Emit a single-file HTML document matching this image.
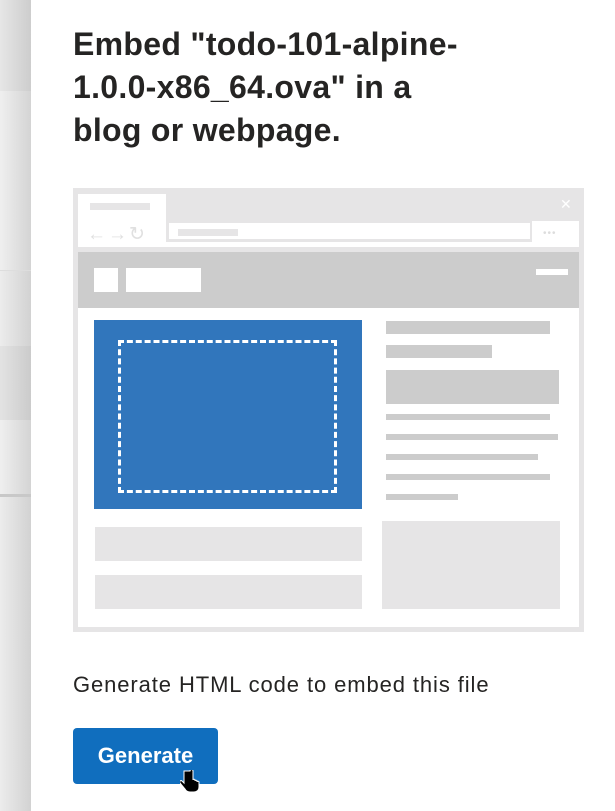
<!DOCTYPE html>
<html><head><meta charset="utf-8"><style>
*{margin:0;padding:0;box-sizing:border-box}
body{width:615px;height:811px;overflow:hidden;background:#fff;font-family:"Liberation Sans","DejaVu Sans",sans-serif;position:relative;color:#252423}
.strip{position:absolute;left:0;top:0;width:31px;height:811px;background:linear-gradient(to right,#ececec,#d2d2d2)}
.s{position:absolute;left:0;width:31px}
.abs{position:absolute}
h1{position:absolute;left:73px;top:23px;font-size:32px;font-weight:bold;line-height:43px;color:#252423;letter-spacing:0.3px;white-space:nowrap}
.g{background:#ccc}
.l{background:#e6e5e6}
</style></head><body>
<div class="strip"></div>
<div class="s" style="top:0;height:91px;background:linear-gradient(to right,#e6e6e6,#cdcdcd)"></div>
<div class="s" style="top:91px;height:180px;background:linear-gradient(to right,#efefef,#d4d4d4)"></div>
<div class="s" style="top:270px;height:1px;background:#ddd"></div>
<div class="s" style="top:346px;height:74px;background:linear-gradient(to right,#e3e3e3,#cbcbcb)"></div>
<div class="s" style="top:420px;height:75px;background:linear-gradient(to right,#efefef,#d4d4d4)"></div>
<div class="s" style="top:494px;height:3px;background:#c8c8c8"></div>

<h1>Embed "todo-101-alpine-<br>1.0.0-x86_64.ova" in a<br>blog or webpage.</h1>

<div class="abs l" style="left:73px;top:188px;width:511px;height:444px"></div>
<div class="abs" style="left:78px;top:194px;width:88px;height:27px;background:#fff"></div>
<div class="abs l" style="left:90px;top:203px;width:60px;height:7px"></div>
<div class="abs" style="left:560px;top:196px;color:#fff;font-size:14px">✕</div>
<div class="abs" style="left:78px;top:221px;width:501px;height:26px;background:#fff"></div>
<div class="abs" style="left:87px;top:225px;color:#e0e0e0;font-size:19px;line-height:20px;letter-spacing:2px">←→↻</div>
<div class="abs" style="left:166px;top:221px;width:366px;height:21px;background:#e6e5e6"></div>
<div class="abs" style="left:169px;top:223px;width:361px;height:16px;background:#fff"></div>
<div class="abs l" style="left:178px;top:229px;width:60px;height:7px"></div>
<div class="abs" style="left:543px;top:228px;color:#ddd;font-size:10px;letter-spacing:1px">•••</div>
<div class="abs g" style="left:78px;top:252px;width:501px;height:56px"></div>
<div class="abs" style="left:94px;top:268px;width:24px;height:24px;background:#fff"></div>
<div class="abs" style="left:126px;top:268px;width:75px;height:24px;background:#fff"></div>
<div class="abs" style="left:536px;top:269px;width:32px;height:6px;background:#fff"></div>
<div class="abs" style="left:78px;top:308px;width:501px;height:319px;background:#fff"></div>
<div class="abs" style="left:94px;top:320px;width:268px;height:189px;background:#3176bc"></div>
<div class="abs" style="left:118px;top:340px;width:219px;height:153px;border:3px dashed #fff"></div>
<div class="abs g" style="left:386px;top:321px;width:164px;height:13px"></div>
<div class="abs g" style="left:386px;top:345px;width:106px;height:13px"></div>
<div class="abs g" style="left:386px;top:370px;width:173px;height:34px"></div>
<div class="abs g" style="left:386px;top:414px;width:164px;height:6px"></div>
<div class="abs g" style="left:386px;top:434px;width:172px;height:6px"></div>
<div class="abs g" style="left:386px;top:454px;width:152px;height:6px"></div>
<div class="abs g" style="left:386px;top:474px;width:164px;height:6px"></div>
<div class="abs g" style="left:386px;top:494px;width:72px;height:6px"></div>
<div class="abs l" style="left:95px;top:527px;width:267px;height:34px"></div>
<div class="abs l" style="left:95px;top:575px;width:267px;height:34px"></div>
<div class="abs l" style="left:382px;top:521px;width:178px;height:88px"></div>

<div class="abs" style="left:73px;top:672px;font-size:22px;letter-spacing:0.9px;color:#252423;white-space:nowrap">Generate HTML code to embed this file</div>
<div class="abs" style="left:73px;top:728px;width:145px;height:56px;background:#106ebe;border-radius:4px;color:#fff;font-size:22px;font-weight:bold;text-align:center;line-height:56px">Generate</div>
<svg class="abs" style="left:180px;top:770px" width="22" height="24" viewBox="0 0 22 24"><path d="M4 1v12l-2-2c-1-1-3 0-2 2l5 6c1 2 3 3 5 3h4c3 0 5-2 5-5v-5c0-1-2-1-2 0v-1c0-1-2-1-2 0v-1c0-1-2-1-2 0V1c0-2-3-2-3 0z" fill="#000" stroke="#fff" stroke-width="1"/></svg>
</body></html>
